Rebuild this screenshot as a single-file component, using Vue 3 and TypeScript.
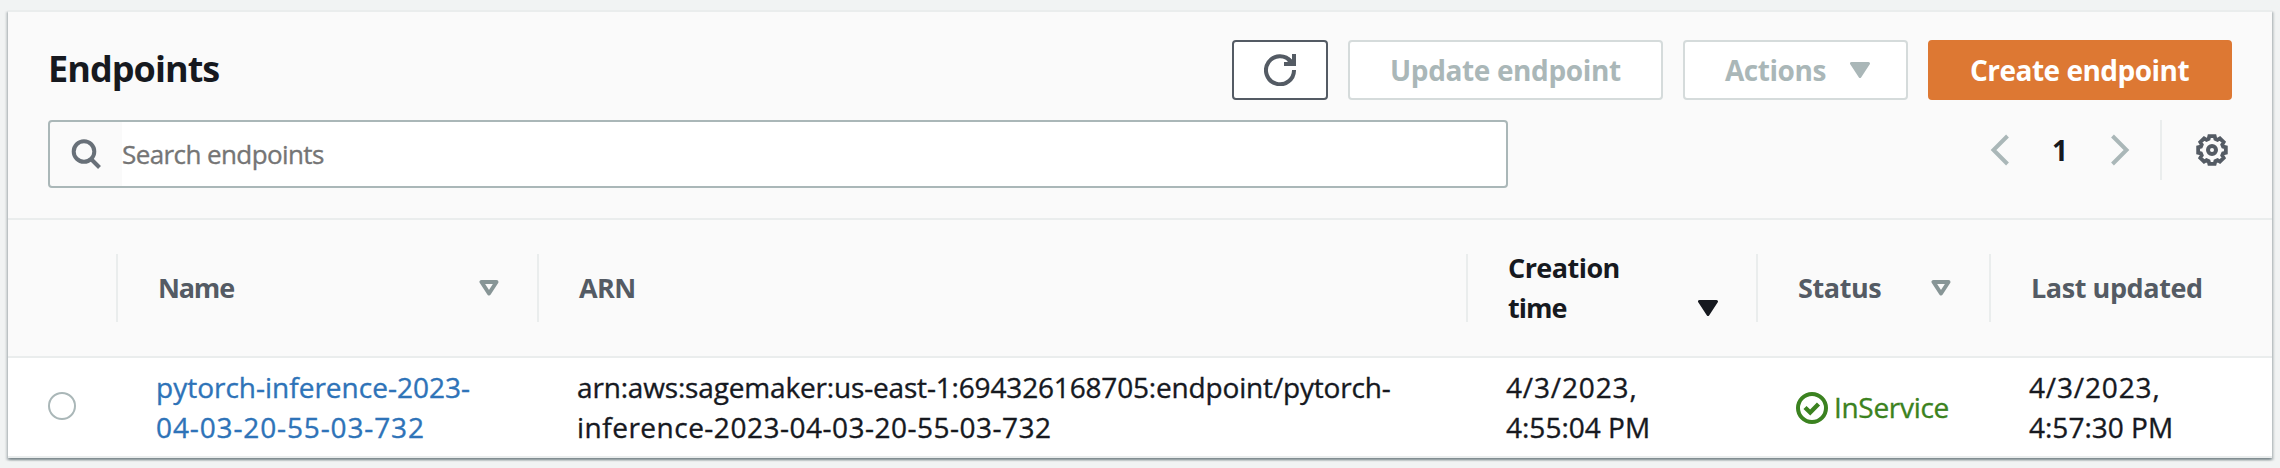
<script setup lang="ts">
import { ref } from 'vue'

interface Column {
  key: string
  lines: string[]
  sort?: 'none' | 'active'
}

const columns: Column[] = [
  { key: 'name', lines: ['Name'], sort: 'none' },
  { key: 'arn', lines: ['ARN'] },
  { key: 'created', lines: ['Creation', 'time'], sort: 'active' },
  { key: 'status', lines: ['Status'], sort: 'none' },
  { key: 'updated', lines: ['Last updated'] },
]

const query = ref('')

// Eight-toothed gear outline, centred in a 32-unit box
const gearPoints = Array.from({ length: 8 }, (_, i) => i * 45)
  .flatMap((a) => [[a - 17, 11.6], [a - 11, 14.1], [a + 11, 14.1], [a + 17, 11.6]])
  .map(([deg, r]) => {
    const t = (deg * Math.PI) / 180
    return `${(16 + r * Math.sin(t)).toFixed(2)},${(16 - r * Math.cos(t)).toFixed(2)}`
  })
  .join(' ')
</script>

<template>
  <div class="page">
    <section class="panel">
      <header class="head">
        <div class="title-row">
          <h2 class="title">Endpoints</h2>
          <div class="actions">
            <button class="btn refresh" aria-label="Refresh">
              <svg width="32" height="32" viewBox="0 0 32 32" fill="none" stroke="currentColor" stroke-width="4">
                <path d="M30 16A14 14 0 1 1 27 7.6" />
                <path d="M30 0v10H20" />
                <path d="M24 5l4 4" />
              </svg>
            </button>
            <button class="btn disabled update"><span>Update endpoint</span></button>
            <button class="btn disabled menu">
              <span>Actions</span>
              <svg width="20" height="16" viewBox="0 0 20 16"><path d="M1.5 1.5h17L10 14.5z" fill="currentColor" stroke="currentColor" stroke-width="3" stroke-linejoin="round" /></svg>
            </button>
            <button class="btn primary"><span>Create endpoint</span></button>
          </div>
        </div>
        <div class="tools">
          <label class="search">
            <svg width="32" height="32" viewBox="0 0 32 32" fill="none" stroke="currentColor" stroke-width="4">
              <circle cx="13" cy="13.5" r="10.3" />
              <path d="M20 21l8.5 8.5" />
            </svg>
            <input v-model="query" placeholder="Search endpoints" />
          </label>
          <div class="pager">
            <svg width="20" height="32" viewBox="0 0 20 32" fill="none" stroke="currentColor" stroke-width="4"><path d="M17.5 2l-14 14 14 14" /></svg>
            <span class="num">1</span>
            <svg width="20" height="32" viewBox="0 0 20 32" fill="none" stroke="currentColor" stroke-width="4"><path d="M2.5 2l14 14-14 14" /></svg>
          </div>
          <div class="gear">
            <svg width="32" height="32" viewBox="0 0 32 32" fill="none" stroke="currentColor" stroke-width="3.8">
              <polygon :points="gearPoints" />
              <circle cx="16" cy="16" r="4" stroke-width="4" />
            </svg>
          </div>
        </div>
      </header>

      <div class="grid thead">
        <div class="th"></div>
        <div v-for="c in columns" :key="c.key" class="th" :class="[c.key, c.sort]">
          <div class="label"><div v-for="l in c.lines" :key="l" :class="l.toLowerCase()">{{ l }}</div></div>
          <svg v-if="c.sort === 'active'" class="sort" width="20" height="16" viewBox="0 0 20 16"><path d="M1.5 1.5h17L10 14.5z" fill="currentColor" stroke="currentColor" stroke-width="3" stroke-linejoin="round" /></svg>
          <svg v-else-if="c.sort" class="sort" width="20" height="16" viewBox="0 0 20 16"><path d="M2.5 2h15L10 13.5z" fill="none" stroke="currentColor" stroke-width="4" stroke-linejoin="round" /></svg>
        </div>
      </div>

      <div class="grid row">
        <div class="pick"><span class="radio"></span></div>
        <div class="td link">
          <div class="name-1">pytorch-inference-2023-</div>
          <div class="name-2">04-03-20-55-03-732</div>
        </div>
        <div class="td">
          <div class="arn-1">arn:aws:sagemaker:us-east-1:694326168705:endpoint/pytorch-</div>
          <div class="arn-2">inference-2023-04-03-20-55-03-732</div>
        </div>
        <div class="td">
          <div class="date">4/3/2023,</div>
          <div>4:55:04 PM</div>
        </div>
        <div class="td status-cell">
          <svg width="32" height="32" viewBox="0 0 32 32" fill="none" stroke="currentColor" stroke-width="4">
            <circle cx="16" cy="16" r="14" />
            <path d="M9 15.5l5.2 5L22.5 12" stroke-width="4.4" />
          </svg>
          <span>InService</span>
        </div>
        <div class="td">
          <div class="date">4/3/2023,</div>
          <div>4:57:30 PM</div>
        </div>
      </div>
    </section>
  </div>
</template>

<style>
body { background: #f1f3f3; }
</style>

<style scoped>
.page {
  box-sizing: border-box;
  width: 2280px;
  height: 468px;
  padding: 10px 8px 0;
  overflow: hidden;
  background: #f1f3f3;
  color: #16191f;
  font: 28px/40px "Open Sans", "Noto Sans", sans-serif;
}
.page * { box-sizing: border-box; }
svg { display: block; flex: none; }
.panel {
  height: 448px;
  border-top: 2px solid #eaeded;
  border-bottom: 2px solid #eaeded;
  background: #fff;
  box-shadow: 0 2px 2px 0 rgba(0, 28, 36, .3), 2px 2px 2px 0 rgba(0, 28, 36, .15), -2px 2px 2px 0 rgba(0, 28, 36, .15);
}
.head {
  height: 208px;
  padding: 28px 40px 0;
  border-bottom: 2px solid #eaeded;
  background: #fafafa;
}
.title-row { display: flex; justify-content: space-between; align-items: center; height: 60px; }
.title { margin: 0; padding-bottom: 2px; font-size: 36px; letter-spacing: -.95px; }
.actions { display: flex; gap: 20px; }
.btn {
  display: flex;
  align-items: center;
  height: 60px;
  padding: 0 0 0 40px;
  border: 2px solid #545b64;
  border-radius: 4px;
  background: #fff;
  color: #545b64;
  font: bold 28px/40px "Open Sans", "Noto Sans", sans-serif;
}
.btn span { padding-bottom: 1px; white-space: nowrap; }
.refresh { width: 96px; justify-content: center; padding: 0; }
.disabled { border-color: #d5dbdb; color: #aab7b8; }
.update { width: 315px; letter-spacing: -.37px; }
.menu { width: 225px; gap: 24px; letter-spacing: -.46px; }
.primary { width: 304px; border-color: #dd7833; background: #dd7833; color: #fff; letter-spacing: -.51px; }
.tools { display: flex; margin-top: 20px; }
.search {
  display: flex;
  align-items: center;
  width: 1460px;
  height: 68px;
  border: 2px solid #aab7b8;
  border-radius: 4px;
  color: #687078;
  background: linear-gradient(90deg, #fafafa 72px, #fff 72px);
}
.search svg { margin: 0 19px 0 21px; }
.search input {
  flex: 1;
  height: 60px;
  padding: 0;
  border: 0;
  outline: 0;
  background: #fff;
  font: 26px "Open Sans", "Noto Sans", sans-serif;
  letter-spacing: -.59px;
  -webkit-text-stroke: .35px;
}
.search input::placeholder { color: #757575; opacity: 1; }
.pager {
  display: flex;
  align-items: center;
  justify-content: space-between;
  width: 140px;
  height: 60px;
  margin-left: 482px;
  color: #aab7b8;
}
.num { padding-bottom: 1px; color: #16191f; font-weight: bold; }
.gear {
  display: flex;
  align-items: center;
  height: 60px;
  margin-left: 30px;
  padding-left: 34px;
  border-left: 2px solid #eaeded;
  color: #545b64;
}
.grid { display: grid; grid-template-columns: 110px 421px 929px 290px 233px 281px; }
.thead {
  height: 138px;
  padding: 34px 0;
  border-bottom: 2px solid #eaeded;
  background: #fafafa;
  color: #545b64;
  font-size: 27px;
  font-weight: bold;
}
.th {
  display: flex;
  align-items: center;
  justify-content: space-between;
  height: 68px;
  padding: 0 38px 1px 40px;
  border-right: 2px solid #eaeded;
  white-space: nowrap;
}
.th:last-child { border-right: 0; }
.sort { color: #879596; margin-top: 1px; }
.th.active { color: #16191f; }
.active .sort { color: #16191f; align-self: flex-end; margin-bottom: 5px; }
.name { letter-spacing: -1.2px; }
.arn { letter-spacing: -.6px; }
.creation { letter-spacing: -.55px; }
.time { letter-spacing: -1px; }
.status { letter-spacing: -.4px; }
.updated .label > div { letter-spacing: -.42px; }
.row { height: 98px; padding-top: 9px; }
.pick { padding: 25px 0 0 40px; }
.radio { display: block; width: 28px; height: 28px; border: 2px solid #aab7b8; border-radius: 50%; }
.td { padding-left: 38px; white-space: nowrap; -webkit-text-stroke: .35px; }
.td svg { -webkit-text-stroke: 0; }
.link { color: #2e73b8; }
.name-2 { letter-spacing: .87px; }
.arn-1 { letter-spacing: -.17px; }
.arn-2 { letter-spacing: .5px; }
.date { letter-spacing: .86px; }
.status-cell { display: flex; align-items: center; gap: 6px; height: 82px; color: #3b8220; letter-spacing: -.31px; }
.status-cell span { padding-bottom: 2px; }
</style>
